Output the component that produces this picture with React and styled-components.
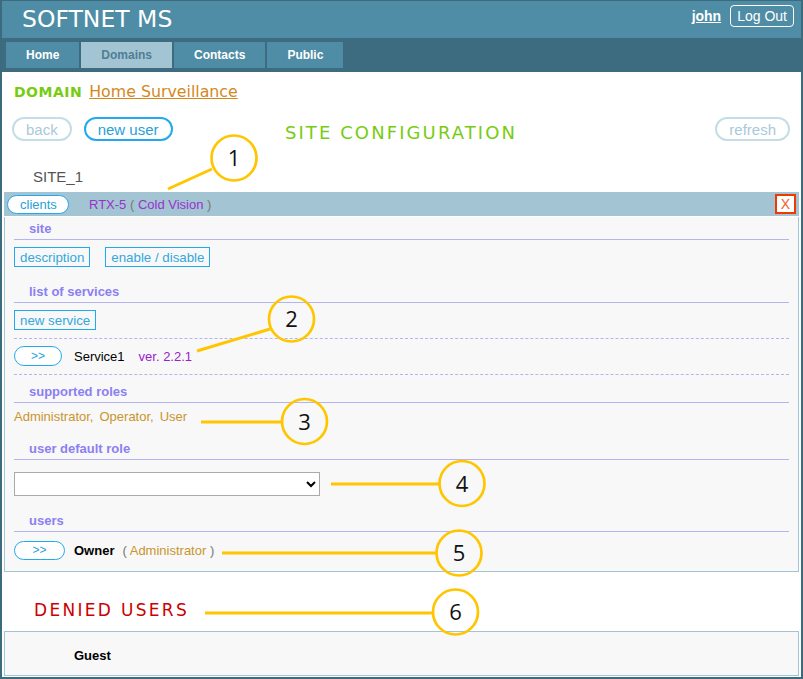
import React from "react";
import styled, {createGlobalStyle} from "styled-components";

const GlobalStyle = createGlobalStyle`
  html, body {
    margin: 0;
    padding: 0;
    background: #fff;
  }
  body {
    font-family: "Liberation Sans", Arial, sans-serif;
    font-size: 13px;
  }
`

const Frame = styled.div`
  position: relative;
  box-sizing: border-box;
  width: 803px;
  height: 679px;
  border: 2px solid #3d6b7e;
  border-top-width: 1px;
  overflow: hidden;
  background: #fff;
`

const Header = styled.div`
  display: flex;
  justify-content: space-between;
  align-items: flex-start;
  height: 37px;
  padding: 0 7px 0 20px;
  background: #4f8ca5;
`

const Title = styled.div`
  margin-top: 5px;
  font-family: "DejaVu Sans", Verdana, sans-serif;
  font-size: 23.5px;
  line-height: 26px;
  color: #fff;
`

const UserBox = styled.div`
  display: flex;
  align-items: center;
  gap: 9px;
  margin-top: 4px;
`

const UserName = styled.a`
  font-size: 14px;
  font-weight: bold;
  color: #fff;
  text-decoration: underline;
`

const LogOut = styled.button`
  height: 22px;
  padding: 0 6px;
  border: 1px solid #fff;
  border-radius: 4px;
  background: transparent;
  color: #fff;
  font-family: "Liberation Sans", Arial, sans-serif;
  font-size: 14px;
`

const Nav = styled.div`
  display: flex;
  gap: 2px;
  height: 34px;
  box-sizing: border-box;
  padding: 4px;
  background: #3d6b80;
`

const Tab = styled.div`
  height: 26px;
  line-height: 26px;
  padding: 0 20px;
  font-size: 12px;
  font-weight: bold;
  color: ${p => p.$active ? "#4e7f94" : "#fff"};
  background: ${p => p.$active ? "#a3c4d3" : "#4f8ca5"};
`

const DomainLine = styled.div`
  display: flex;
  align-items: baseline;
  gap: 7px;
  padding: 10px 12px 0;
  line-height: 20px;
`

const DomainLabel = styled.span`
  font-family: "DejaVu Sans", Verdana, sans-serif;
  font-weight: bold;
  font-size: 14px;
  letter-spacing: 0.5px;
  color: #77cc11;
`

const DomainName = styled.a`
  font-family: "DejaVu Sans", Verdana, sans-serif;
  font-size: 15.8px;
  color: #d4881c;
  text-decoration: underline;
`

const Toolbar = styled.div`
  display: grid;
  grid-template-columns: 1fr auto 1fr;
  align-items: start;
  margin-top: 15px;
  padding: 0 11px 0 10px;
`

const ButtonGroup = styled.div`
  display: flex;
  gap: 12px;
  justify-content: ${p => p.$end ? "flex-end" : "flex-start"};
`

const Pill = styled.button`
  height: 24px;
  box-sizing: border-box;
  padding: 0 12px;
  border: 2px solid ${p => p.$faded ? "#c4dde7" : "#22aaee"};
  border-radius: 12px;
  background: #fff;
  color: ${p => p.$faded ? "#a9c9d8" : "#2a9fd6"};
  font-family: "Liberation Sans", Arial, sans-serif;
  font-size: 15px;
`

const PageTitle = styled.div`
  margin-top: ${p => p.$mt || 0}px;
  padding: ${p => p.$pad || "0"};
  line-height: 20px;
  font-family: "DejaVu Sans", Verdana, sans-serif;
  font-size: ${p => p.$size}px;
  letter-spacing: ${p => p.$spacing}px;
  color: ${p => p.$color};
`

const SiteName = styled.div`
  margin-top: 25px;
  padding-left: 31px;
  line-height: 18px;
  font-size: 15px;
  color: #555;
`

const SiteBar = styled.div`
  display: flex;
  align-items: center;
  height: 24px;
  margin: 6px 2px 0;
  padding: 0 3px;
  background: #a3c4d3;
`

const SmallPill = styled.button`
  height: ${p => p.$h || 20}px;
  width: ${p => p.$w ? `${p.$w}px` : "auto"};
  box-sizing: border-box;
  padding: 0 12px;
  border: 1px solid #22aaee;
  border-radius: 10px;
  background: #fff;
  color: #2a9fd6;
  font-family: "Liberation Sans", Arial, sans-serif;
  font-size: ${p => p.$small ? 12 : 13}px;
  line-height: 1;
`

const Device = styled.span`
  margin-left: 20px;
  color: #9933cc;
`

const Paren = styled.span`
  color: #777;
`

const CloseBox = styled.div`
  margin-left: auto;
  width: 21px;
  height: 20px;
  box-sizing: border-box;
  border: 2px solid #ee3a00;
  display: flex;
  align-items: center;
  justify-content: center;
  color: #f0602a;
  font-size: 14px;
  background: #fff;
`

const Panel = styled.div`
  margin: 0 2px;
  border: 1px solid #a3c4d3;
  border-top: none;
  background: #f8f8f8;
  padding: 0 9px 11px;
`

const Heading = styled.div`
  margin-top: ${p => p.$mt}px;
  padding: 4px 0 2px 15px;
  line-height: 16px;
  font-size: 13px;
  font-weight: bold;
  color: #8b7ff2;
  border-bottom: 1px solid #b4b4f0;
`

const ButtonRow = styled.div`
  display: flex;
  gap: 15px;
  margin-top: 7px;
`

const SquareBtn = styled.button`
  height: 20px;
  padding: 0 5px;
  border: 1px solid #22aaee;
  border-radius: 0;
  background: transparent;
  color: #33a8dd;
  font-family: "Liberation Sans", Arial, sans-serif;
  font-size: 13.3px;
`

const Dashed = styled.div`
  margin-top: 8px;
  border-top: 1px dashed #b4b4f0;
`

const ItemRow = styled.div`
  display: flex;
  align-items: center;
  height: 20px;
  margin-top: ${p => p.$mt}px;
`

const ItemName = styled.span`
  margin-left: ${p => p.$ml}px;
  color: #000;
  font-weight: ${p => p.$bold ? "bold" : "normal"};
`

const Version = styled.span`
  margin-left: 14px;
  color: #9922cc;
`

const Role = styled.span`
  margin-left: ${p => p.$ml || 0}px;
  color: #c8952e;
`

const Roles = styled.div`
  margin-top: 6px;
  line-height: 16px;
`

const RoleSelect = styled.select`
  display: block;
  margin-top: 12px;
  width: 306px;
  height: 24px;
  border: 1px solid #aaa;
  border-radius: 0;
  background: #fff;
`

const DeniedPanel = styled.div`
  display: flex;
  align-items: center;
  height: 45px;
  box-sizing: border-box;
  margin: 11px 2px 0;
  padding: 3px 0 0 69px;
  border: 1px solid #a3c4d3;
  background: #f8f8f8;
  font-weight: bold;
`

const Overlay = styled.svg`
  position: absolute;
  left: -2px;
  top: -1px;
  pointer-events: none;
`

const callouts = [
    {n: 1, cx: 234, cy: 158, line: [168, 189, 212, 169]},
    {n: 2, cx: 291.5, cy: 319, line: [197, 351, 270, 329]},
    {n: 3, cx: 304.5, cy: 421.5, line: [201, 422, 282, 422]},
    {n: 4, cx: 462, cy: 483.5, line: [331, 484, 439.5, 484]},
    {n: 5, cx: 459, cy: 553, line: [222, 553, 436.5, 553]},
    {n: 6, cx: 455.5, cy: 612, line: [205, 613, 433.5, 613]},
]

const Callouts = () => (
    <Overlay width="803" height="679" viewBox="0 0 803 679">
        {callouts.map(c => (
            <g key={c.n}>
                <line x1={c.line[0]} y1={c.line[1]} x2={c.line[2]} y2={c.line[3]}
                      stroke="#ffc600" strokeWidth="3"/>
                <circle cx={c.cx} cy={c.cy} r="22.5" fill="none" stroke="#ffc600" strokeWidth="2.7"/>
                <text x={c.cx} y={c.cy + 8} textAnchor="middle" fontSize="22"
                      fontFamily="'Open Sans', 'DejaVu Sans', sans-serif" fill="#111">{c.n}</text>
            </g>
        ))}
    </Overlay>
)

const App = () => {
    return (
        <Frame>
            <GlobalStyle/>
            <Header>
                <Title>SOFTNET MS</Title>
                <UserBox>
                    <UserName>john</UserName>
                    <LogOut>Log Out</LogOut>
                </UserBox>
            </Header>
            <Nav>
                <Tab>Home</Tab>
                <Tab $active>Domains</Tab>
                <Tab>Contacts</Tab>
                <Tab>Public</Tab>
            </Nav>

            <DomainLine>
                <DomainLabel>DOMAIN</DomainLabel>
                <DomainName>Home Surveillance</DomainName>
            </DomainLine>

            <Toolbar>
                <ButtonGroup>
                    <Pill $faded>back</Pill>
                    <Pill>new user</Pill>
                </ButtonGroup>
                <PageTitle $color="#77cc11" $size={18} $spacing={2.1} $pad="6px 0 0">
                    SITE CONFIGURATION
                </PageTitle>
                <ButtonGroup $end>
                    <Pill $faded>refresh</Pill>
                </ButtonGroup>
            </Toolbar>

            <SiteName>SITE_1</SiteName>
            <SiteBar>
                <SmallPill $h={19} $w={62}>clients</SmallPill>
                <Device>RTX-5 <Paren>(</Paren> Cold Vision <Paren>)</Paren></Device>
                <CloseBox>X</CloseBox>
            </SiteBar>

            <Panel>
                <Heading $mt={1}>site</Heading>
                <ButtonRow>
                    <SquareBtn>description</SquareBtn>
                    <SquareBtn>enable / disable</SquareBtn>
                </ButtonRow>

                <Heading $mt={13}>list of services</Heading>
                <ButtonRow>
                    <SquareBtn>new service</SquareBtn>
                </ButtonRow>
                <Dashed/>
                <ItemRow $mt={7}>
                    <SmallPill $w={48} $small>&gt;&gt;</SmallPill>
                    <ItemName $ml={12}>Service1</ItemName>
                    <Version>ver. 2.2.1</Version>
                </ItemRow>
                <Dashed/>

                <Heading $mt={5}>supported roles</Heading>
                <Roles>
                    <Role>Administrator,</Role>
                    <Role $ml={6}>Operator,</Role>
                    <Role $ml={6}>User</Role>
                </Roles>

                <Heading $mt={12}>user default role</Heading>
                <RoleSelect defaultValue="">
                    <option value=""></option>
                </RoleSelect>

                <Heading $mt={13}>users</Heading>
                <ItemRow $mt={8}>
                    <SmallPill $w={51} $h={19} $small>&gt;&gt;</SmallPill>
                    <ItemName $ml={9} $bold>Owner</ItemName>
                    <Role $ml={8}><Paren>(</Paren> Administrator <Paren>)</Paren></Role>
                </ItemRow>
            </Panel>

            <PageTitle $color="#cc0000" $size={17} $spacing={2.3} $mt={28} $pad="0 0 0 32px">
                DENIED USERS
            </PageTitle>
            <DeniedPanel>Guest</DeniedPanel>

            <Callouts/>
        </Frame>
    )
}

export default App
